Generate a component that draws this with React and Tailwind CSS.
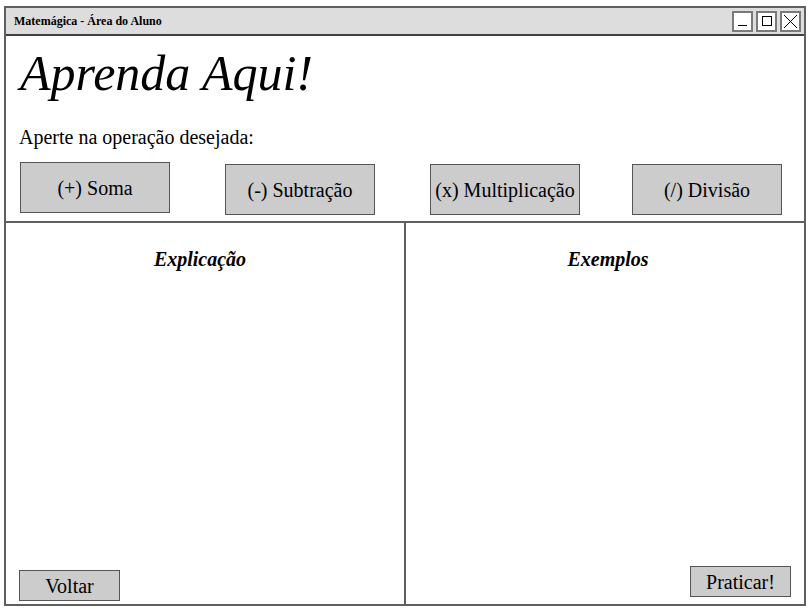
const serif = { fontFamily: '"Liberation Serif", "Times New Roman", serif' };

const ops = [
  { label: "(+) Soma", cls: "ml-[14px] mt-[0px]" },
  { label: "(-) Subtração", cls: "ml-[55px] mt-[2px]" },
  { label: "(x) Multiplicação", cls: "ml-[55px] mt-[2px]" },
  { label: "(/) Divisão", cls: "ml-[52px] mt-[2px]" },
];

function WinButton({ children }) {
  return (
    <div className="w-[21px] h-[21px] border-2 border-[#7a7a7a] bg-white flex items-center justify-center">
      {children}
    </div>
  );
}

export default function App() {
  return (
    <div className="w-[809px] h-[609px] bg-white text-black" style={serif}>
      <div className="ml-[4px] mt-[6px] w-[802px] h-[600px] border-2 border-[#5f5f5f] flex flex-col">
        <div className="h-[28px] bg-[#dddddd] border-b-2 border-[#3f3f3f] flex items-center pl-[8px] pr-[3px]">
          <span className="text-[12px] font-bold">Matemágica - Área do Aluno</span>
          <div className="ml-auto flex gap-[3px]">
            <WinButton>
              <div className="w-[9px] h-[1px] bg-black mt-[8px]" />
            </WinButton>
            <WinButton>
              <div className="w-[10px] h-[10px] border border-black" />
            </WinButton>
            <WinButton>
              <svg width="15" height="15" viewBox="0 0 15 15">
                <path d="M1 1L14 14M14 1L1 14" stroke="#000" strokeWidth="1" />
              </svg>
            </WinButton>
          </div>
        </div>

        <div className="h-[187px] border-b-2 border-[#5f5f5f] flex flex-col">
          <h1 className="pl-[14px] mt-[5px] text-[50px] italic leading-[64px]">Aprenda Aqui!</h1>
          <p className="pl-[13px] mt-[20px] text-[20px] leading-[24px]">Aperte na operação desejada:</p>
          <div className="flex mt-[13px]">
            {ops.map((op) => (
              <div
                key={op.label}
                className={`${op.cls} w-[150px] h-[51px] bg-[#cccccc] border border-[#555] flex items-center justify-center text-[20px]`}
              >
                {op.label}
              </div>
            ))}
          </div>
        </div>

        <div className="flex-1 flex">
          <div className="w-[400px] border-r-2 border-[#5f5f5f] flex flex-col">
            <h2 className="mt-[24px] pr-[10px] text-center text-[20px] font-bold italic leading-[24px]">Explicação</h2>
            <div className="mt-auto mb-[3px] ml-[13px] w-[101px] h-[31px] bg-[#cccccc] border border-[#555] flex items-center justify-center text-[20px]">
              Voltar
            </div>
          </div>
          <div className="flex-1 flex flex-col">
            <h2 className="mt-[24px] pl-[6px] text-center text-[20px] font-bold italic leading-[24px]">Exemplos</h2>
            <div className="mt-auto mb-[7px] ml-auto mr-[13px] w-[101px] h-[31px] bg-[#cccccc] border border-[#555] flex items-center justify-center text-[20px]">
              Praticar!
            </div>
          </div>
        </div>
      </div>
    </div>
  );
}
